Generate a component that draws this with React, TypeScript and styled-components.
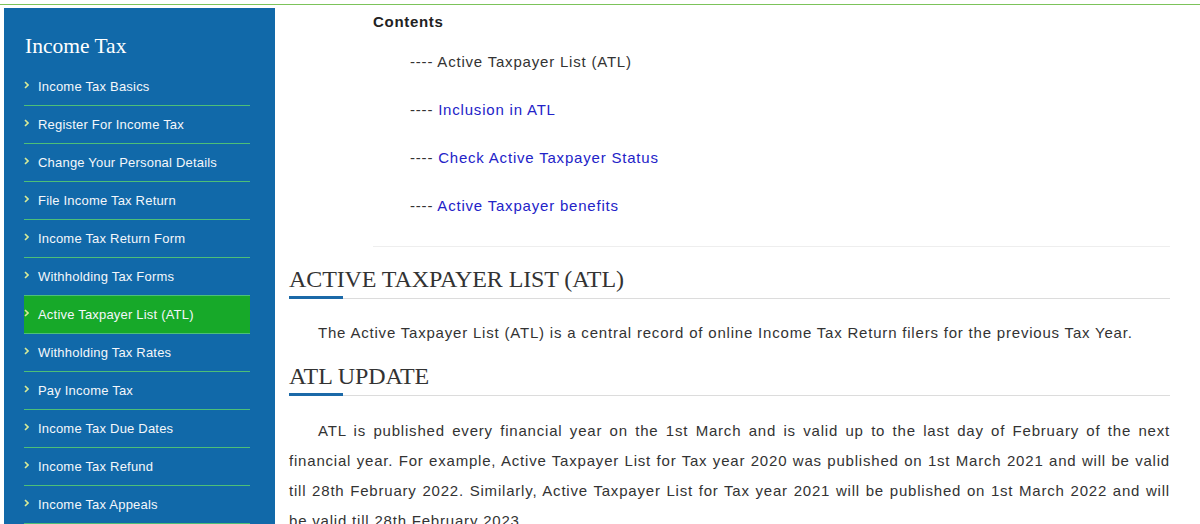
import React from "react";
import styled, { createGlobalStyle } from "styled-components";

const Global = createGlobalStyle`
  html, body { margin: 0; padding: 0; background: #fff; }
  body { font-family: "Liberation Sans", Arial, sans-serif; }
  * { box-sizing: border-box; }
`;

const Page = styled.div`
  margin-top: 4px;
  border-top: 1px solid #7cc35a;
  padding-top: 3px;
  display: flex;
  align-items: flex-start;
  height: 520px;
  overflow: hidden;
`;

const Sidebar = styled.aside`
  margin-left: 4px;
  width: 271px;
  flex: none;
  align-self: stretch;
  background: #1169a9;
  padding: 0 25px 0 20px;
`;

const SideTitle = styled.h2`
  margin: 0;
  padding: 26px 0 10px 1px;
  font-family: "Liberation Serif", "Times New Roman", serif;
  font-weight: normal;
  font-size: 21.5px;
  line-height: 24px;
  color: #fff;
`;

const MenuList = styled.ul`
  list-style: none;
  margin: 0;
  padding: 0;
`;

const MenuItem = styled.li<{ $active?: boolean }>`
  height: 38px;
  display: flex;
  align-items: center;
  gap: 9px;
  padding-left: 0;
  border-bottom: 1px solid #4dbf78;
  background: ${(p) => (p.$active ? "#17a929" : "transparent")};
  color: #f4f7fb;
  font-size: 13px;
  letter-spacing: 0.2px;
`;

const ChevronIcon = styled.svg`
  flex: none;
  margin-top: -3px;
`;

const Main = styled.main`
  flex: 1;
  margin-left: 14px;
  margin-right: 30px;
  color: #333;
`;

const Contents = styled.section`
  margin-left: 84px;
  border-bottom: 1px solid #eeeeee;
  padding-bottom: 31px;
`;

const ContentsTitle = styled.div`
  font-weight: bold;
  font-size: 15px;
  letter-spacing: 0.7px;
  line-height: 18px;
  padding-top: 5px;
  color: #222;
`;

const TocList = styled.ul`
  list-style: none;
  margin: 0;
  padding: 21px 0 0 37px;
  display: flex;
  flex-direction: column;
  gap: 29px;
`;

const TocItem = styled.li<{ $link?: boolean }>`
  font-size: 15px;
  line-height: 19px;
  color: #333;
  letter-spacing: 0.8px;
  span {
    color: ${(p) => (p.$link ? "#2323c8" : "#333")};
  }
`;

const Spacer = styled.div<{ $h: number }>`
  height: ${(p) => p.$h}px;
`;

const Heading = styled.h2`
  position: relative;
  margin: 0;
  font-family: "Liberation Serif", "Times New Roman", serif;
  font-weight: normal;
  font-size: 24px;
  letter-spacing: -0.1px;
  line-height: 28px;
  color: #333;
  padding-bottom: 5px;
  border-bottom: 1px solid #dcdcdc;
  &::after {
    content: "";
    position: absolute;
    left: 0;
    bottom: -1px;
    width: 54px;
    height: 3px;
    background: #1b69a8;
  }
`;

const Para = styled.p`
  margin: 0;
  font-size: 15px;
  line-height: 30px;
  text-indent: 29px;
  text-align: justify;
  color: #333;
  letter-spacing: 0.8px;
`;

const menu = [
  "Income Tax Basics",
  "Register For Income Tax",
  "Change Your Personal Details",
  "File Income Tax Return",
  "Income Tax Return Form",
  "Withholding Tax Forms",
  "Active Taxpayer List (ATL)",
  "Withholding Tax Rates",
  "Pay Income Tax",
  "Income Tax Due Dates",
  "Income Tax Refund",
  "Income Tax Appeals",
];

const toc = [
  { t: "Active Taxpayer List (ATL)", link: false },
  { t: "Inclusion in ATL", link: true },
  { t: "Check Active Taxpayer Status", link: true },
  { t: "Active Taxpayer benefits", link: true },
];

const Chevron = () => (
  <ChevronIcon width="5" height="8" viewBox="0 0 5 8">
    <polyline points="1,1 4,4 1,7" fill="none" stroke="#d6ea98" strokeWidth="1.6" />
  </ChevronIcon>
);

export default function App() {
  return (
    <>
      <Global />
      <Page>
        <Sidebar>
          <SideTitle>Income Tax</SideTitle>
          <MenuList>
            {menu.map((m) => (
              <MenuItem key={m} $active={m === "Active Taxpayer List (ATL)"}>
                <Chevron />
                {m}
              </MenuItem>
            ))}
          </MenuList>
        </Sidebar>
        <Main>
          <Contents>
            <ContentsTitle>Contents</ContentsTitle>
            <TocList>
              {toc.map((i) => (
                <TocItem key={i.t} $link={i.link}>
                  ---- <span>{i.t}</span>
                </TocItem>
              ))}
            </TocList>
          </Contents>
          <Spacer $h={18} />
          <Heading>ACTIVE TAXPAYER LIST (ATL)</Heading>
          <Spacer $h={19} />
          <Para>
            The Active Taxpayer List (ATL) is a central record of online Income Tax Return filers for the previous Tax Year.
          </Para>
          <Spacer $h={14} />
          <Heading>ATL UPDATE</Heading>
          <Spacer $h={20} />
          <Para>
            ATL is published every financial year on the 1st March and is valid up to the last day of February of the next
            financial year. For example, Active Taxpayer List for Tax year 2020 was published on 1st March 2021 and will be
            valid till 28th February 2022. Similarly, Active Taxpayer List for Tax year 2021 will be published on 1st March
            2022 and will be valid till 28th February 2023.
          </Para>
        </Main>
      </Page>
    </>
  );
}
